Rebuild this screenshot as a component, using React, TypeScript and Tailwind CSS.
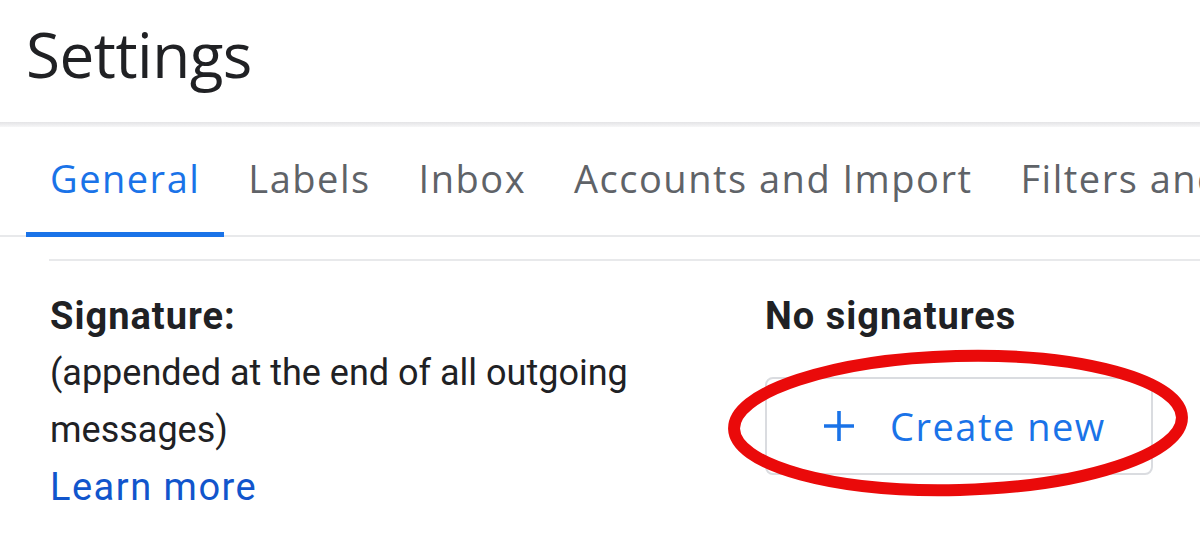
import React from 'react';

const tabs = ['General', 'Labels', 'Inbox', 'Accounts and Import', 'Filters and Blocked Addresses'];

const App = () => {
  return (
    <div className="w-[1200px] h-[543px] overflow-hidden bg-white text-[#202124]">
      {/* Header */}
      <div className="h-[122px] pl-[26px] pt-[14px]">
        <h1 className="text-[62px] leading-[80px] font-normal tracking-[-0.5px]" style={{ fontFamily: '"Open Sans", sans-serif' }}>
          Settings
        </h1>
      </div>
      <div className="h-[5px] bg-gradient-to-b from-[#e4e4e6] to-[#f6f6f7]" />

      {/* Tabs */}
      <div className="flex border-b-2 border-[#e8e9eb] whitespace-nowrap pl-[26px] mt-[26px]" style={{ fontFamily: '"Open Sans", sans-serif' }}>
        {tabs.map((t, i) => (
          <div
            key={t}
            className={
              i === 0
                ? 'px-[24px] pb-[29px] text-[38px] leading-[50px] tracking-[1.5px] text-[#1a73e8] border-b-[5px] border-[#1a73e8] -mb-[2px]'
                : 'px-[24px] pb-[29px] text-[38px] leading-[50px] tracking-[1.5px] text-[#5f6368]'
            }
          >
            {t}
          </div>
        ))}
      </div>

      <div className="ml-[49px] mt-[22px] border-t-2 border-[#e8e9eb]" />

      {/* Signature row */}
      <div className="flex pl-[50px] pt-[27px]" style={{ fontFamily: 'Roboto, sans-serif' }}>
        <div className="w-[715px] leading-[57px]">
          <div className="font-bold text-[38px] tracking-[1px]">Signature:</div>
          <div className="w-[600px] text-[36px]">(appended at the end of all outgoing messages)</div>
          <div className="text-[38px] tracking-[1.5px] text-[#1155cc]">Learn more</div>
        </div>
        <div className="relative">
          <div className="font-bold text-[38px] tracking-[1px] leading-[57px]">No signatures</div>
          <button className="mt-[32px] w-[388px] h-[98px] border-2 border-[#dadce0] rounded-[8px] flex items-center pl-[54px] text-[#1a73e8]" style={{ fontFamily: '"Open Sans", sans-serif' }}>
            <svg width="36" height="36" viewBox="0 0 24 24" className="mr-[33px]">
              <path d="M12 2v20M2 12h20" stroke="#1a73e8" strokeWidth="2.4" fill="none" />
            </svg>
            <span className="text-[38px] tracking-[1.5px]">Create new</span>
          </button>
          {/* red annotation ellipse */}
          <svg className="absolute left-[-42px] top-[59px]" width="470" height="152" viewBox="0 0 470 152">
            <ellipse cx="235" cy="76" rx="224" ry="67" transform="rotate(-1.5 235 76)" fill="none" stroke="#ea0a0a" strokeWidth="12" />
          </svg>
        </div>
      </div>
    </div>
  );
};

export default App;
